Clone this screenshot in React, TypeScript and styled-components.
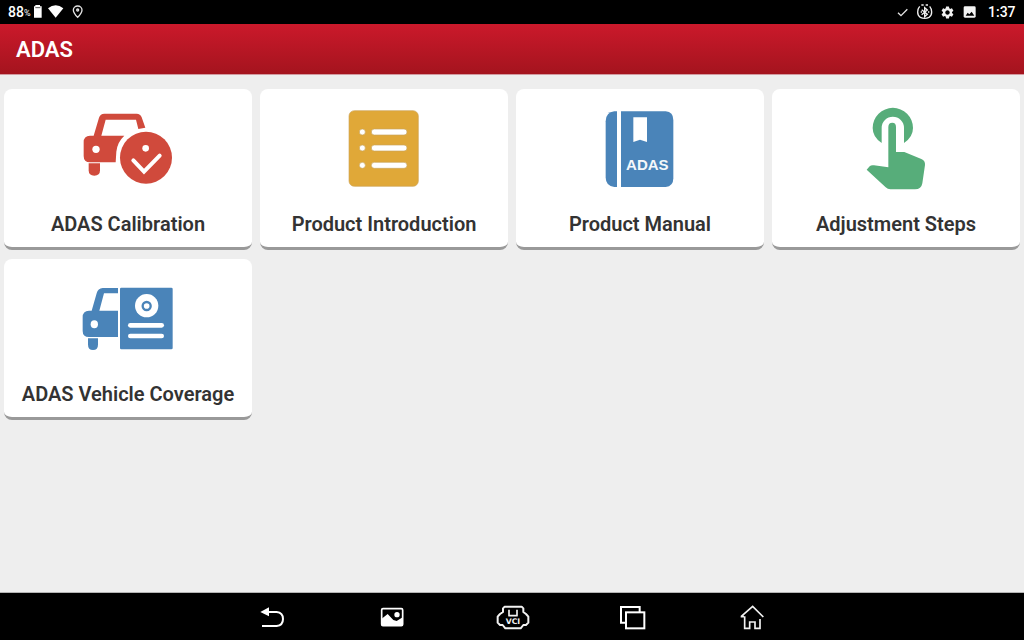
import React from "react";
import styled, { createGlobalStyle } from "styled-components";
import { MdSettings } from "react-icons/md";

const GlobalStyle = createGlobalStyle`
  *, *::before, *::after { box-sizing: border-box; }
  body {
    margin: 0;
    background: #eeeeee;
    font-family: Roboto, "Liberation Sans", sans-serif;
  }
`;

const Screen = styled.div`
  display: flex;
  flex-direction: column;
  min-height: 100vh;
`;

const StatusBar = styled.div`
  display: flex;
  justify-content: space-between;
  height: 24px;
  padding: 0 8px;
  background: #000;
  color: #fff;
`;

const StatusGroup = styled.div<{ $gap: number }>`
  display: flex;
  align-items: center;
  gap: ${(p) => p.$gap}px;
`;

const Battery = styled.span`
  width: 22px;
  font-size: 14px;
  font-weight: 500;
  line-height: 26px;
  white-space: nowrap;
`;

const Percent = styled.span`
  font-size: 9px;
  font-weight: 400;
  vertical-align: 1px;
`;

const Clock = styled.time`
  width: 28px;
  margin-left: 5px;
  font-size: 14px;
  font-weight: 500;
  line-height: 26px;
  white-space: nowrap;
`;

const GearSlot = styled.span`
  display: flex;
  justify-content: center;
  width: 16px;
  color: #f0f0f0;
`;

const Header = styled.header`
  display: flex;
  align-items: center;
  height: 51px;
  padding: 2px 16px 0;
  border-bottom: 1px solid #d29aa0;
  background: linear-gradient(#cb192b, #a4141e);
`;

const Title = styled.h1`
  margin: 0;
  color: #fff;
  font-size: 22px;
  font-weight: 600;
  line-height: 28px;
`;

const Grid = styled.main`
  flex: 1;
  display: grid;
  grid-template-columns: repeat(4, minmax(0, 1fr));
  align-content: start;
  gap: 9px 8px;
  padding: 14px 4px;
`;

const Card = styled.button`
  display: flex;
  flex-direction: column;
  align-items: center;
  gap: 17px;
  padding: 11px 4px 11px;
  border: 0;
  border-bottom: 3px solid #999;
  border-radius: 8px;
  background: #fff;
  color: #333;
  font-family: inherit;
  cursor: pointer;
`;

const CardLabel = styled.span`
  font-size: 20px;
  font-weight: 600;
  line-height: 24px;
`;

const NavBar = styled.nav`
  display: flex;
  justify-content: center;
  height: 48px;
  border-top: 1px solid #b4b4b4;
  background: #000;
`;

const NavButton = styled.button`
  display: flex;
  align-items: center;
  justify-content: center;
  width: 120px;
  padding: 0;
  border: 0;
  background: none;
  cursor: pointer;
`;

const red = "#d04a3c";
const blue = "#4a84b9";

const CalibrationIcon = () => (
  <svg width="116" height="95" viewBox="0 0 348 285" aria-hidden="true">
    <path
      fill={red}
      d="M71 107 L87 53 Q91 41 103 41 H200 Q211 41 215 52 L226 83 L205 87 L198 59 H107 L94 107 H163 Q142 126 139 155 L137 187 H60 Q41 187 41 168 V127 Q41 107 60 107 Z"
    />
    <path fill={red} d="M56 190 H90 V211 Q90 227 73 227 Q56 227 56 211 Z" />
    <circle cx="78" cy="148" r="11" fill="#fff" />
    <circle cx="228" cy="173" r="78" fill={red} />
    <circle cx="227" cy="145" r="10" fill="#fff" />
    <path d="M190 181 L222 215 L269 167" fill="none" stroke="#fff" strokeWidth="12" strokeLinecap="round" />
  </svg>
);

const IntroductionIcon = () => (
  <svg width="102" height="95" viewBox="-6 0 306 285" aria-hidden="true">
    <rect x="42" y="32" width="208" height="227" rx="16" fill="#e0a838" stroke="#cfa65c" strokeWidth="2" />
    {[96, 144, 196].map((y) => (
      <g key={y} fill="#fff" stroke="#c9a45c" strokeWidth="2">
        <circle cx="82" cy={y} r="9" />
        <rect x="109" y={y - 9} width="107" height="18" rx="9" />
      </g>
    ))}
  </svg>
);

const ManualIcon = () => (
  <svg width="90" height="95" viewBox="0 0 270 285" aria-hidden="true">
    <path fill={blue} d="M66 34 V261 H58 Q32 258 32 232 V64 Q32 37 58 34 Z" />
    <path fill={blue} d="M78 34 H212 Q235 36 235 60 V235 Q235 259 212 261 H78 Z" />
    <path fill="#fff" d="M115 52 H156 V126 L135 119 L115 126 Z" />
    <text
      x="157"
      y="211"
      textAnchor="middle"
      fill="#f4f8fb"
      fontFamily="'Liberation Sans', sans-serif"
      fontWeight="700"
      fontSize="45"
    >
      ADAS
    </text>
  </svg>
);

const StepsIcon = () => (
  <svg width="82" height="95" viewBox="0 0 246 285" aria-hidden="true">
    <g fill="#57ad7a">
      <path d="M80 129 Q53 111 53 84 A60 60 0 0 1 174 84 Q174 111 147 129 V84 A33 33 0 0 0 80 84 Z" />
      <path d="M100 202 V81 Q100 68 112 68 Q123 68 123 81 V156 H148 L199 177 Q211 182 210 195 L202 250 Q199 268 180 268 H106 Q98 268 92 262 L35 209 L44 199 Q49 194 57 196 Z" />
    </g>
  </svg>
);

const CoverageIcon = () => (
  <svg width="116" height="95" viewBox="0 -15 348 285" aria-hidden="true">
    <path
      fill={blue}
      d="M65 107 L80 55 Q84 40 98 39 H144 V55 H102 L88 107 H144 V186 H57 Q38 186 38 168 V127 Q38 107 57 107 Z"
    />
    <path fill={blue} d="M54 190 H84 V209 Q84 225 69 225 Q54 225 54 209 Z" />
    <ellipse cx="73" cy="148" rx="11" ry="12" fill="#fff" />
    <rect x="150" y="38" width="158" height="185" rx="4" fill={blue} />
    <circle cx="230" cy="92" r="35" fill="#fff" />
    <circle cx="230" cy="93" r="12" fill="none" stroke={blue} strokeWidth="7" />
    <rect x="174" y="144" width="108" height="14" rx="7" fill="#fff" />
    <rect x="174" y="176" width="108" height="14" rx="7" fill="#fff" />
  </svg>
);

const BatteryIcon = () => (
  <svg width="10" height="24" viewBox="102 0 30 72" aria-hidden="true">
    <path fill="#fff" d="M106 15 H120 V19 H125 V53 H102 V19 H106 Z" />
    <path d="M106 23 H121" stroke="#555" strokeWidth="3" />
  </svg>
);

const WifiIcon = () => (
  <svg width="16" height="24" viewBox="144 0 48 72" aria-hidden="true">
    <path fill="#fff" d="M144 25 Q167 6 190 25 L167 53 Z" />
  </svg>
);

const PinIcon = () => (
  <svg width="20" height="24" viewBox="204 0 60 72" aria-hidden="true">
    <g fill="none" stroke="#e4e4e4" strokeWidth="4">
      <path d="M233 52 Q220 39 220 30 A13 12 0 0 1 246 30 Q246 39 233 52 Z" />
      <circle cx="233" cy="30" r="3" />
    </g>
  </svg>
);

const CheckIcon = () => (
  <svg width="16" height="24" viewBox="45 0 48 72" aria-hidden="true">
    <path d="M54 38 L63 47 L82 28" fill="none" stroke="#e4e4e4" strokeWidth="4" />
  </svg>
);

const BluetoothIcon = () => (
  <svg width="16" height="24" viewBox="111 0 48 72" aria-hidden="true">
    <g fill="none" stroke="#f0f0f0" strokeWidth="4">
      <path d="M119 19 Q113 26 113 36 Q113 47 121 52 Q127 55 134 55 Q141 55 147 52 Q155 47 155 36 Q155 26 149 19" />
      <path d="M124 15 H131 M137 15 H144" strokeWidth="5" />
      <path d="M125 29 L142 43 L134 50 V23 L142 30 L125 44" />
    </g>
    <path d="M122 36 H126 M144 36 H148" stroke="#f0f0f0" strokeWidth="4" />
  </svg>
);

const PictureIcon = () => (
  <svg width="16" height="24" viewBox="243 0 48 72" aria-hidden="true">
    <rect x="251" y="19" width="36" height="34" rx="4" fill="#f4f4f4" />
    <path fill="#000" d="M257 47 L263 38 L268 43 L275 35 L283 47 Z" />
  </svg>
);

const BackIcon = () => (
  <svg width="36" height="36" viewBox="12 26 108 108" aria-hidden="true">
    <path fill="#fff" d="M31 65 L57 51 V78 Z" />
    <path d="M52 65 H80 Q99 67 99 86 Q99 105 80 107 H36" fill="none" stroke="#fff" strokeWidth="6" />
  </svg>
);

const GalleryIcon = () => (
  <svg width="36" height="36" viewBox="372 26 108 108" aria-hidden="true">
    <rect x="395" y="55" width="63" height="51" rx="4" fill="none" stroke="#fff" strokeWidth="5" />
    <path fill="#fff" d="M395 85 L413 71 L430 89 L440 92 L458 81 V106 H395 Z" />
    <circle cx="441" cy="73" r="8" fill="#fff" />
  </svg>
);

const VciIcon = () => (
  <svg width="36" height="36" viewBox="42 26 108 108" aria-hidden="true">
    <g fill="none" stroke="#f2f2f2" strokeWidth="6" strokeLinejoin="round">
      <path d="M74 49 H125 L130 54 V65 L138 71 L145 79 V97 L138 104 H130 L122 114 H76 L68 104 H60 L53 97 V79 L60 71 L69 65 V54 Z" />
      <path d="M87 58 V76 H111 V58" strokeWidth="5" />
    </g>
    <text
      x="99"
      y="100"
      textAnchor="middle"
      fill="#f2f2f2"
      fontFamily="'DejaVu Sans', sans-serif"
      fontWeight="700"
      fontSize="23"
    >
      VCI
    </text>
  </svg>
);

const RecentsIcon = () => (
  <svg width="36" height="36" viewBox="402 26 108 108" aria-hidden="true">
    <g fill="none" stroke="#fff" strokeWidth="6">
      <path d="M437 97 H423 V50 H479 V66" />
      <rect x="438" y="66" width="55" height="48" />
    </g>
  </svg>
);

const HomeIcon = () => (
  <svg width="36" height="36" viewBox="102 26 108 108" aria-hidden="true">
    <g fill="none" stroke="#f2f2f2" strokeWidth="5">
      <path d="M122 79 H132 M123 79 L158 48 L190 80" />
      <path d="M134 78 V114 H149 V95 H165 V114 H180 V86" />
    </g>
  </svg>
);

const cards = [
  { label: "ADAS Calibration", Icon: CalibrationIcon },
  { label: "Product Introduction", Icon: IntroductionIcon },
  { label: "Product Manual", Icon: ManualIcon },
  { label: "Adjustment Steps", Icon: StepsIcon },
  { label: "ADAS Vehicle Coverage", Icon: CoverageIcon },
];

const navItems = [
  { label: "Back", Icon: BackIcon },
  { label: "Gallery", Icon: GalleryIcon },
  { label: "VCI", Icon: VciIcon },
  { label: "Recent apps", Icon: RecentsIcon },
  { label: "Home", Icon: HomeIcon },
];

export default function App() {
  return (
    <Screen>
      <GlobalStyle />
      <StatusBar>
        <StatusGroup $gap={4}>
          <Battery>
            88<Percent>%</Percent>
          </Battery>
          <BatteryIcon />
          <WifiIcon />
          <PinIcon />
        </StatusGroup>
        <StatusGroup $gap={6}>
          <CheckIcon />
          <BluetoothIcon />
          <GearSlot>
            <MdSettings size={15} />
          </GearSlot>
          <PictureIcon />
          <Clock>1:37</Clock>
        </StatusGroup>
      </StatusBar>
      <Header>
        <Title>ADAS</Title>
      </Header>
      <Grid>
        {cards.map(({ label, Icon }) => (
          <Card key={label} type="button">
            <Icon />
            <CardLabel>{label}</CardLabel>
          </Card>
        ))}
      </Grid>
      <NavBar>
        {navItems.map(({ label, Icon }) => (
          <NavButton key={label} type="button" aria-label={label}>
            <Icon />
          </NavButton>
        ))}
      </NavBar>
    </Screen>
  );
}
